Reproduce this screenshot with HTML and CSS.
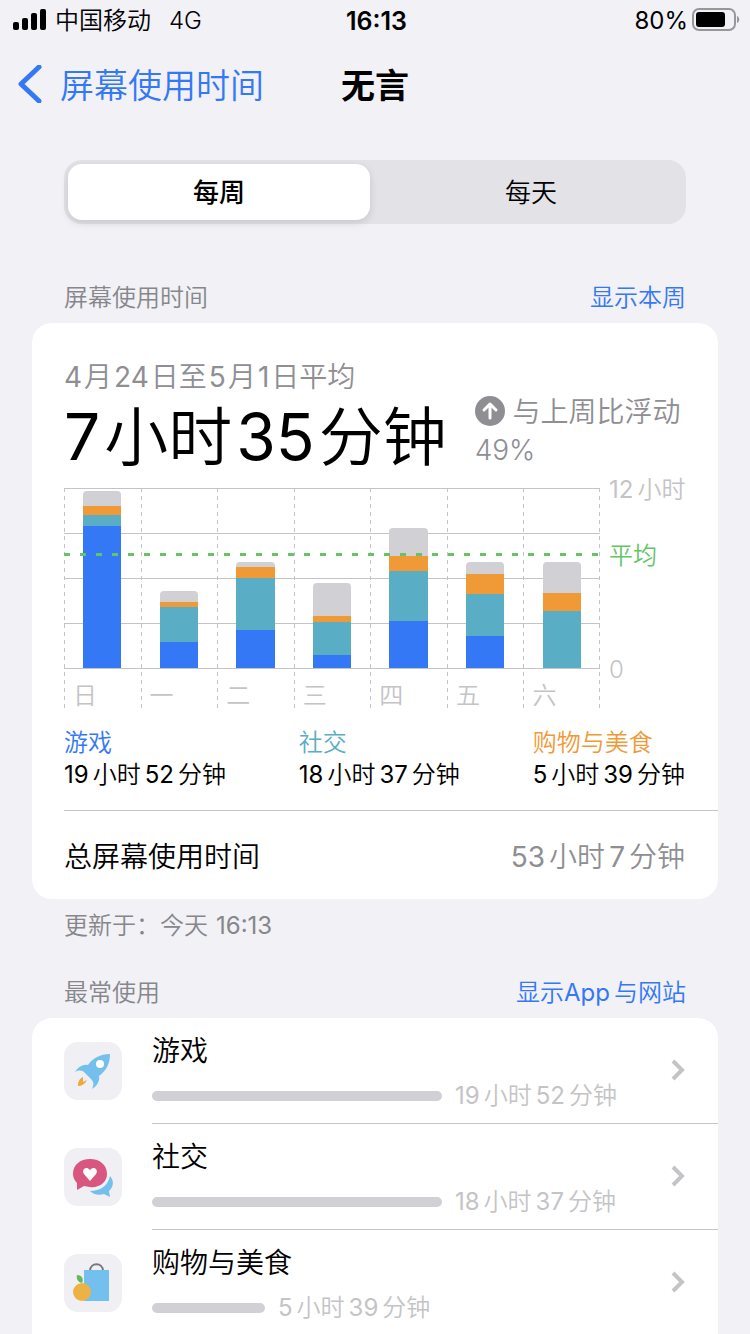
FILE: index.html
```html
<!DOCTYPE html>
<html lang="zh-CN">
<head>
    <meta charset="UTF-8">
    <meta name="viewport" content="width=device-width, initial-scale=1.0">
    <title>屏幕使用时间</title>
    <link rel="stylesheet" href="styles.css">
</head>
<body>
    <div class="status-bar">
        <div class="carrier">
            <svg class="signal" width="34" height="22" viewBox="0 0 34 22">
                <rect x="0" y="13" width="6" height="8" rx="2"/>
                <rect x="9" y="9" width="6" height="12" rx="2"/>
                <rect x="18" y="4" width="6" height="17" rx="2"/>
                <rect x="27" y="0" width="6" height="21" rx="2"/>
            </svg>
            <span>中国移动</span>
            <span class="network">4G</span>
        </div>
        <div class="clock">16:13</div>
        <div class="battery">
            <span class="num">80%</span>
            <svg width="48" height="24" viewBox="0 0 48 24">
                <rect x="1" y="1" width="42" height="21" rx="6" fill="none" stroke="#97979b" stroke-width="2"/>
                <rect x="4" y="4" width="29" height="15" rx="3"/>
                <path d="M45 8c3 1 3 6 0 7z" fill="#97979b"/>
            </svg>
        </div>
    </div>

    <header class="nav">
        <a class="back" href="#">
            <svg width="24" height="38" viewBox="0 0 24 38">
                <path d="M21 2L3 19l18 17" fill="none" stroke="#3478f6" stroke-width="5" stroke-linecap="round" stroke-linejoin="round"/>
            </svg>
            屏幕使用时间
        </a>
        <h1>无言</h1>
    </header>

    <main>
        <div class="segmented">
            <button class="active">每周</button>
            <button>每天</button>
        </div>

        <div class="section-head">
            <h2>屏幕使用时间</h2>
            <a href="#">显示本周</a>
        </div>

        <section class="card summary">
            <p class="range"><span class="num">4</span>月<span class="num">24</span>日至<span class="num">5</span>月<span class="num">1</span>日平均</p>
            <div class="average">
                <div class="total"><span class="num">7</span>小时<span class="num">35</span>分钟</div>
                <div class="change">
                    <svg width="30" height="30" viewBox="0 0 30 30">
                        <circle cx="15" cy="15" r="15" fill="#8e8e93"/>
                        <path d="M15 22V8M9 14l6-6 6 6" fill="none" stroke="#fff" stroke-width="3" stroke-linecap="round" stroke-linejoin="round"/>
                    </svg>
                    与上周比浮动<br>49%
                </div>
            </div>

            <div class="chart">
                <div class="plot">
                    <div class="day">
                        <div class="bar">
                            <i class="other" style="height: 15px"></i>
                            <i class="shopping" style="height: 9px"></i>
                            <i class="social" style="height: 11px"></i>
                            <i class="games" style="height: 142px"></i>
                        </div>
                        <span>日</span>
                    </div>
                    <div class="day">
                        <div class="bar">
                            <i class="other" style="height: 11px"></i>
                            <i class="shopping" style="height: 5px"></i>
                            <i class="social" style="height: 35px"></i>
                            <i class="games" style="height: 26px"></i>
                        </div>
                        <span>一</span>
                    </div>
                    <div class="day">
                        <div class="bar">
                            <i class="other" style="height: 5px"></i>
                            <i class="shopping" style="height: 11px"></i>
                            <i class="social" style="height: 52px"></i>
                            <i class="games" style="height: 38px"></i>
                        </div>
                        <span>二</span>
                    </div>
                    <div class="day">
                        <div class="bar">
                            <i class="other" style="height: 33px"></i>
                            <i class="shopping" style="height: 6px"></i>
                            <i class="social" style="height: 33px"></i>
                            <i class="games" style="height: 13px"></i>
                        </div>
                        <span>三</span>
                    </div>
                    <div class="day">
                        <div class="bar">
                            <i class="other" style="height: 28px"></i>
                            <i class="shopping" style="height: 15px"></i>
                            <i class="social" style="height: 50px"></i>
                            <i class="games" style="height: 47px"></i>
                        </div>
                        <span>四</span>
                    </div>
                    <div class="day">
                        <div class="bar">
                            <i class="other" style="height: 12px"></i>
                            <i class="shopping" style="height: 20px"></i>
                            <i class="social" style="height: 42px"></i>
                            <i class="games" style="height: 32px"></i>
                        </div>
                        <span>五</span>
                    </div>
                    <div class="day">
                        <div class="bar">
                            <i class="other" style="height: 31px"></i>
                            <i class="shopping" style="height: 18px"></i>
                            <i class="social" style="height: 57px"></i>
                        </div>
                        <span>六</span>
                    </div>
                    <div class="average-line"></div>
                </div>
                <div class="scale">
                    <span><span class="num">12</span>小时</span>
                    <span class="mean">平均</span>
                    <span class="zero">0</span>
                </div>
            </div>

            <dl class="legend">
                <div>
                    <dt class="games-text">游戏</dt>
                    <dd><span class="num">19</span>小时<span class="num">52</span>分钟</dd>
                </div>
                <div>
                    <dt class="social-text">社交</dt>
                    <dd><span class="num">18</span>小时<span class="num">37</span>分钟</dd>
                </div>
                <div>
                    <dt class="shopping-text">购物与美食</dt>
                    <dd><span class="num">5</span>小时<span class="num">39</span>分钟</dd>
                </div>
            </dl>

            <div class="total-row">
                <span>总屏幕使用时间</span>
                <span class="value"><span class="num">53</span>小时<span class="num">7</span>分钟</span>
            </div>
        </section>

        <p class="updated">更新于：今天<span class="num updated-time">16:13</span></p>

        <div class="section-head">
            <h2>最常使用</h2>
            <a href="#">显示<span class="num">App</span>与网站</a>
        </div>

        <section class="card list">
            <a class="item" href="#">
                <svg class="icon" width="58" height="58" viewBox="0 0 58 58">
                    <path d="M46 12C36 12 29 16 24 23C19 22 14 25 11 30C15 28 18 28 21 31L27 37C30 40 30 43 28 47C33 44 36 39 35 34C42 29 46 22 46 12Z" fill="#73c0ef"/>
                    <circle cx="36" cy="22" r="4" fill="#fff"/>
                    <path d="M19 35C15 37 14 40 14 44C18 44 21 42 23 38L19 40Z" fill="#efa83e"/>
                </svg>
                <div class="item-body">
                    <h3>游戏</h3>
                    <div class="usage">
                        <div class="track" style="width: 290px"></div>
                        <span><span class="num">19</span>小时<span class="num">52</span>分钟</span>
                    </div>
                    <svg class="chevron" width="14" height="22" viewBox="0 0 14 22"><path d="M2 2l9 9-9 9"/></svg>
                </div>
            </a>
            <a class="item" href="#">
                <svg class="icon" width="58" height="58" viewBox="0 0 58 58">
                    <path d="M26 43C36 43 44 38 46 28C50 32 50 39 45 43L46 49L40 46C34 48 29 46 26 43Z" fill="#73c0ef"/>
                    <path d="M26 11C16 11 9 17 9 26C9 30 11 33 13 35L13 42L20 38C34 42 43 35 43 26C43 17 36 11 26 11Z" fill="#d95680"/>
                    <path d="M26 33L20 26C17 22 22 17 26 22C30 17 35 22 32 26Z" fill="#fff"/>
                </svg>
                <div class="item-body">
                    <h3>社交</h3>
                    <div class="usage">
                        <div class="track" style="width: 290px"></div>
                        <span><span class="num">18</span>小时<span class="num">37</span>分钟</span>
                    </div>
                    <svg class="chevron" width="14" height="22" viewBox="0 0 14 22"><path d="M2 2l9 9-9 9"/></svg>
                </div>
            </a>
            <a class="item" href="#">
                <svg class="icon" width="58" height="58" viewBox="0 0 58 58">
                    <path d="M26 17C26 8 39 8 39 17" fill="none" stroke="#77777b" stroke-width="2"/>
                    <rect x="20" y="16" width="25" height="31" fill="#73c0ef"/>
                    <circle cx="18" cy="38" r="9" fill="#edb244"/>
                    <path d="M13 21C18 21 20 25 18 29C14 28 12 25 13 21Z" fill="#68b65a"/>
                </svg>
                <div class="item-body">
                    <h3>购物与美食</h3>
                    <div class="usage">
                        <div class="track" style="width: 113px"></div>
                        <span><span class="num">5</span>小时<span class="num">39</span>分钟</span>
                    </div>
                    <svg class="chevron" width="14" height="22" viewBox="0 0 14 22"><path d="M2 2l9 9-9 9"/></svg>
                </div>
            </a>
        </section>
    </main>
</body>
</html>
```
FILE: styles.css
```css
* {
    box-sizing: border-box;
}

body {
    margin: 0;
    background-color: #f1f1f6;
    color: #000;
    font-family: Inter, "Noto Sans CJK SC", sans-serif;
    font-size: 24px;
    line-height: 32px;
    font-weight: 350;
}

h1, h2, h3, p, dl, dd {
    margin: 0;
    font-weight: inherit;
}

a {
    color: #3478f6;
    text-decoration: none;
}

svg {
    display: block;
    flex: none;
}

/* Numbers and latin words set inside Chinese text */
.num {
    margin: 0 4px;
    font-weight: 400;
}

.num:first-child {
    margin-left: 0;
}

/* Status bar and navigation */
.status-bar {
    display: grid;
    grid-template-columns: 1fr auto 1fr;
    align-items: center;
    height: 42px;
    padding: 0 10px 0 13px;
}

.carrier, .battery {
    display: flex;
    align-items: center;
}

.carrier {
    gap: 8px;
}

.carrier svg, .battery svg {
    margin-bottom: 2px;
}

.network {
    margin-left: 10px;
}

.clock {
    font-size: 25px;
    font-weight: 600;
}

.battery {
    justify-content: flex-end;
}

.nav {
    display: grid;
    grid-template-columns: 1fr auto 1fr;
    align-items: center;
    height: 88px;
    padding: 0 18px;
    font-size: 34px;
}

.back {
    display: flex;
    align-items: center;
    gap: 18px;
}

.back svg {
    margin-bottom: 4px;
}

.nav h1 {
    font-size: 34px;
    font-weight: 700;
}

main {
    padding: 30px 32px 0;
}

.segmented {
    display: flex;
    gap: 10px;
    height: 64px;
    margin: 0 32px 58px;
    padding: 4px;
    background-color: #e2e2e7;
    border-radius: 18px;
}

.segmented button {
    flex: 1;
    padding: 0 0 4px;
    border: none;
    border-radius: 14px;
    background: none;
    color: #000;
    font-family: inherit;
    font-size: 26px;
    font-weight: 350;
}

.segmented .active {
    background-color: #fff;
    font-weight: 500;
    box-shadow: 0 3px 8px rgba(0, 0, 0, 0.12);
}

.section-head {
    display: flex;
    justify-content: space-between;
    padding: 0 32px 9px;
}

.section-head h2, .updated {
    color: #86868b;
    font-size: 24px;
}

.card {
    background-color: #fff;
    border-radius: 20px;
    overflow: hidden;
}

.summary {
    padding: 38px 0 0 32px;
}

.range {
    color: #8e8e93;
    font-size: 28px;
}

.range .num {
    margin-right: 2px;
    margin-left: 2px;
}

.range .num:first-child {
    margin-left: 0;
}

.average {
    display: flex;
    gap: 28px;
}

.total {
    font-size: 64px;
    line-height: 88px;
    white-space: nowrap;
}

.change {
    color: #8e8e93;
    font-size: 28px;
    line-height: 38px;
    white-space: nowrap;
}

.change svg {
    display: inline-block;
    vertical-align: -4px;
}

/* Weekly chart, 180px stands for 12 hours */
.chart {
    display: flex;
    gap: 9px;
    margin-top: 7px;
    padding-right: 32px;
    color: #c4c4c6;
}

.plot {
    position: relative;
    display: flex;
    flex: 1;
    height: 222px;
    background: repeating-linear-gradient(#c4c4c6 0 1px, transparent 1px 45px) top / 100% 181px no-repeat;
}

.day {
    flex: 1;
    background: repeating-linear-gradient(#c4c4c6 0 4px, transparent 4px 8px) left / 1px 100% no-repeat;
}

.day:nth-child(7) {
    background: repeating-linear-gradient(#c4c4c6 0 4px, transparent 4px 8px) left / 1px 100% no-repeat, repeating-linear-gradient(#c4c4c6 0 4px, transparent 4px 8px) right / 1px 100% no-repeat;
}

.day span {
    display: block;
    padding: 12px 0 0 9px;
}

.bar {
    display: flex;
    flex-direction: column;
    justify-content: flex-end;
    width: 50%;
    height: 180px;
    margin: 0 auto;
}

.other {
    background-color: #d0d0d5;
    border-radius: 4px 4px 0 0;
}

.shopping {
    background-color: #f09a37;
}

.social {
    background-color: #59adc4;
}

.games {
    background-color: #3478f6;
}

.average-line {
    position: absolute;
    top: 65px;
    left: 0;
    right: 0;
    height: 3px;
    background: repeating-linear-gradient(90deg, #65c466 0 6px, transparent 6px 16px);
}

.scale {
    display: flex;
    flex-direction: column;
    width: 77px;
    height: 212px;
    margin-top: -14px;
    white-space: nowrap;
}

.mean {
    margin-top: 34px;
    color: #65c466;
}

.zero {
    margin-top: auto;
}

.legend {
    display: flex;
    justify-content: space-between;
    padding: 17px 33px 19px 0;
    border-bottom: 1px solid #c6c6c8;
}

.legend dd {
    white-space: nowrap;
}

.games-text {
    color: #3478f6;
}

.social-text {
    color: #59adc4;
}

.shopping-text {
    color: #f09a37;
}

.total-row {
    display: flex;
    align-items: center;
    justify-content: space-between;
    height: 88px;
    padding: 4px 33px 0 0;
    font-size: 28px;
}

.value {
    color: #8e8e93;
}

.updated {
    padding: 11px 32px 35px;
}

.updated .updated-time {
    margin-left: 8px;
}

/* Most used list */
.list {
    padding-bottom: 32px;
}

.item {
    display: flex;
    gap: 30px;
    padding-left: 32px;
    color: #000;
}

.icon {
    margin-top: 24px;
    border-radius: 14px;
    background-color: #efeff4;
}

.item-body {
    position: relative;
    flex: 1;
    height: 106px;
    padding-top: 17px;
    border-bottom: 1px solid #c6c6c8;
}

.item h3 {
    font-size: 28px;
}

.usage {
    display: flex;
    align-items: center;
    gap: 13px;
    margin-top: 13px;
    color: #c4c4c6;
}

.track {
    height: 10px;
    border-radius: 5px;
    background-color: #d0d0d5;
}

.chevron {
    position: absolute;
    top: 41px;
    right: 33px;
    fill: none;
    stroke: #c4c4c6;
    stroke-width: 4px;
}
```
